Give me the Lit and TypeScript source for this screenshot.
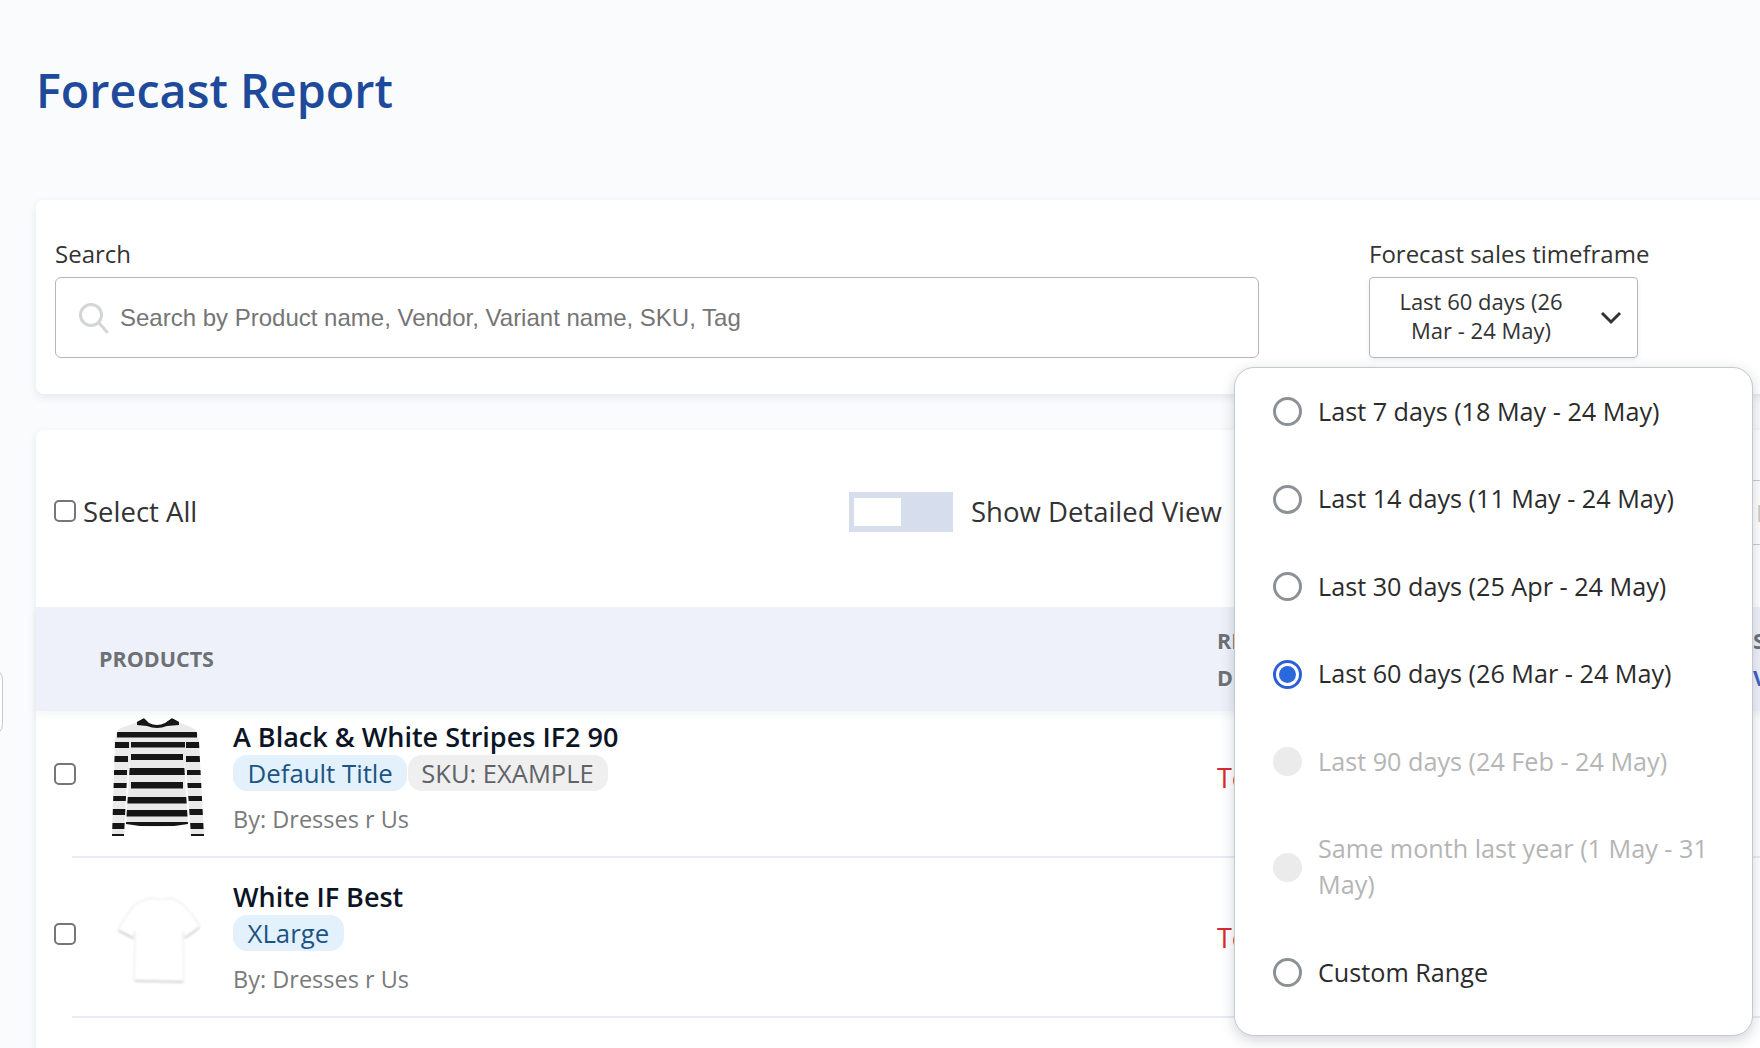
import { LitElement, html, css, svg } from "lit";
import { customElement } from "lit/decorators.js";

const ranges = [
  { label: "Last 7 days (18 May - 24 May)", state: "" },
  { label: "Last 14 days (11 May - 24 May)", state: "" },
  { label: "Last 30 days (25 Apr - 24 May)", state: "" },
  { label: "Last 60 days (26 Mar - 24 May)", state: "on" },
  { label: "Last 90 days (24 Feb - 24 May)", state: "off" },
  { label: "Same month last year (1 May - 31 May)", state: "off" },
  { label: "Custom Range", state: "" },
];

const stripes = svg`
  <svg class="thumb" viewBox="0 0 100 120" width="100" height="120" aria-hidden="true">
    <defs>
      <clipPath id="shirt">
        <path d="M28 5 L37 0 L42 5 Q50 9 58 5 L65 0 L74 5 L86 10 Q92 14 92 24 L97 118 L84 118 L80 60 Q78 50 77 44 L81 106 Q50 112 19 106 L23 44 Q22 50 20 60 L17 118 L5 118 L8 24 Q8 14 14 10 Z" />
      </clipPath>
      <filter id="soft" x="-5%" y="-5%" width="110%" height="110%"><feGaussianBlur stdDeviation="0.7" /></filter>
    </defs>
    <g clip-path="url(#shirt)" filter="url(#soft)">
      <rect width="100" height="120" fill="#ebeaea" />
      <g fill="#161616">
        <path d="M30 3 L37 0 L42 4 Q50 8 58 4 L65 0 L72 3 L72 7 L60 8 Q50 12 40 8 L30 7 Z" />
        <rect x="10" y="14" width="80" height="5.5" />
        <rect x="24" y="24" width="54" height="5.5" />
        <rect x="24" y="36" width="52" height="6" />
        <rect x="22" y="50" width="56" height="7" />
        <rect x="24" y="64" width="52" height="6.5" />
        <rect x="20" y="79" width="60" height="6.5" />
        <rect x="18" y="92" width="64" height="6.5" />
        <rect x="18" y="104" width="64" height="4" />
        <rect x="0" y="24" width="22" height="6" />
        <rect x="0" y="38" width="21" height="6" />
        <rect x="0" y="52" width="20" height="5" />
        <rect x="0" y="65" width="20" height="5" />
        <rect x="0" y="78" width="20" height="5" />
        <rect x="0" y="91" width="20" height="6" />
        <rect x="0" y="105" width="20" height="6" />
        <rect x="0" y="116" width="20" height="2" />
        <rect x="79" y="24" width="21" height="6" />
        <rect x="79" y="38" width="21" height="6" />
        <rect x="80" y="52" width="20" height="5" />
        <rect x="80" y="65" width="20" height="5" />
        <rect x="80" y="78" width="20" height="5" />
        <rect x="80" y="91" width="20" height="6" />
        <rect x="80" y="105" width="20" height="6" />
        <rect x="80" y="116" width="20" height="2" />
      </g>
    </g>
  </svg>`;

const tee = svg`
  <svg class="thumb" viewBox="0 0 100 120" width="100" height="120" aria-hidden="true">
    <defs>
      <filter id="teeblur" x="-10%" y="-10%" width="120%" height="120%"><feGaussianBlur stdDeviation="0.9" /></filter>
    </defs>
    <path d="M30 25 L44 20 Q54 23 64 20 L72 24 Q84 32 93 49 L78 60 L76 53 L77 104 L27 102 L28 53 L26 60 L11 52 Q20 34 30 25 Z"
      fill="#fff" stroke="#ececec" stroke-width="1.2" filter="url(#teeblur)" />
    <path d="M28 103 L76 104 M12 53 L26 60 M78 60 L92 50" stroke="#d8d8d8" stroke-width="2" fill="none" filter="url(#teeblur)" />
  </svg>`;

@customElement("app-root")
export class AppRoot extends LitElement {
  static styles = css`
    :host {
      display: block;
      width: 1760px;
      height: 1048px;
      overflow: hidden;
      position: relative;
      background: #fafbfd;
      font-family: "Open Sans", sans-serif;
      color: #222;
    }
    .page {
      width: 2000px;
      padding: 0 0 0 36px;
      box-sizing: border-box;
    }
    h1 {
      margin: 0;
      padding-top: 61px;
      height: 200px;
      box-sizing: border-box;
      font-size: 46.7px;
      line-height: 58px;
      font-weight: 600;
      color: #1e4a9c;
    }
    .card {
      background: #fff;
      border-radius: 8px;
      box-shadow: 0 3px 8px rgba(40, 50, 80, 0.1);
    }
    .filters {
      height: 194px;
      box-sizing: border-box;
      padding: 35px 0 0 19px;
      display: flex;
      gap: 110px;
    }
    .field label {
      display: block;
      height: 42px;
      font-size: 24px;
      line-height: 38px;
      color: #333;
    }
    .search-box {
      width: 1204px;
      height: 81px;
      box-sizing: border-box;
      border: 1px solid #b5b7c0;
      border-radius: 6px;
      display: flex;
      align-items: center;
      padding-left: 22px;
      gap: 10px;
    }
    .search-box input {
      border: 0;
      outline: 0;
      flex: 1;
      background: transparent;
      font-family: "Liberation Sans", sans-serif;
      font-size: 24px;
      padding: 0;
    }
    .search-box input::placeholder { color: #757575; }
    .select {
      width: 269px;
      height: 81px;
      box-sizing: border-box;
      border: 1px solid #b5b7c0;
      border-radius: 4px;
      box-shadow: 0 2px 5px rgba(40, 50, 80, 0.08);
      display: flex;
      align-items: center;
      padding-right: 15px;
    }
    .select span {
      flex: 1;
      text-align: center;
      font-size: 22px;
      line-height: 29px;
      color: #333;
      padding: 0 31px 3px 23px;
    }
    .table { margin-top: 36px; min-height: 800px; }
    .toolbar {
      height: 177px;
      padding-bottom: 15px;
      box-sizing: border-box;
      display: flex;
      align-items: center;
      font-size: 27.5px;
      color: #333;
    }
    .select-all {
      width: 795px;
      padding-left: 18px;
      box-sizing: content-box;
      display: flex;
      align-items: center;
      gap: 7px;
      flex: none;
    }
    .toggle-group {
      width: 904px;
      flex: none;
      display: flex;
      align-items: center;
      gap: 18px;
    }
    .toggle {
      width: 104px;
      height: 40px;
      margin-top: 2px;
      box-sizing: border-box;
      padding: 6px 0 0 5px;
      background: #d6deee;
    }
    .toggle i {
      display: block;
      width: 47px;
      height: 28px;
      background: #fff;
    }
    .export-box {
      width: 200px;
      height: 65px;
      margin-top: 2px;
      box-sizing: border-box;
      border-top: 1px solid #ccc;
      border-bottom: 1px solid #ccc;
      padding-left: 3px;
      line-height: 63px;
      font-size: 24px;
      color: #ccc;
    }
    input[type="checkbox"] {
      appearance: none;
      width: 22px;
      height: 22px;
      margin: 0;
      flex: none;
      box-sizing: border-box;
      border: 2px solid #767676;
      border-radius: 5px;
      background: #fff;
    }
    .thead {
      position: relative;
      z-index: 1;
      height: 104px;
      display: flex;
      align-items: center;
      background: #eef1f9;
      box-shadow: 0 4px 8px rgba(40, 50, 80, 0.05);
      font-size: 21.5px;
      line-height: 37px;
      font-weight: 700;
      color: #6d7175;
    }
    .col-a { width: 1181px; padding: 0 0 2px 63px; box-sizing: border-box; flex: none; }
    .col-b { width: 536px; flex: none; }
    .col-c { flex: none; }
    .col-c a { color: #3f5fc8; }
    .rows { margin-top: -13px; }
    .row {
      margin-left: 36px;
      height: 160px;
      box-sizing: border-box;
      border-bottom: 2px solid #e8ecf6;
      padding-top: 21px;
      display: flex;
      align-items: flex-start;
    }
    .row input { margin: 44px 0 0 -18px; }
    .thumb { flex: none; margin: -1px 26px 0 31px; }
    .info { width: 984px; flex: none; }
    .name {
      font-size: 27px;
      line-height: 36px;
      font-weight: 600;
      color: #0b1526;
    }
    .chips { display: flex; gap: 1px; height: 36px; }
    .chip {
      font-size: 25.8px;
      line-height: 36px;
      padding: 0 14.5px;
      border-radius: 14px;
      background: #e3f1fd;
      color: #1d5484;
    }
    .chip.sku { background: #efefef; color: #5f6368; font-size: 25.5px; padding: 0 14px 0 13px; }
    .by {
      margin-top: 9px;
      font-size: 23.5px;
      line-height: 38px;
      color: #7a7a7a;
    }
    .status {
      font-size: 27px;
      line-height: 36px;
      margin-top: 41px;
      color: #d82c2c;
    }
    .edge-tab {
      position: absolute;
      left: -20px;
      top: 668px;
      width: 23px;
      height: 68px;
      box-sizing: border-box;
      background: #fff;
      border: 1px solid #c4c8d2;
      border-radius: 12px;
    }
    .menu {
      position: absolute;
      left: 1234px;
      top: 367px;
      width: 519px;
      height: 669px;
      box-sizing: border-box;
      z-index: 2;
      background: #fff;
      border: 1px solid #c4c8d0;
      border-radius: 20px;
      box-shadow: 0 4px 14px rgba(30, 40, 60, 0.2);
    }
    .opt {
      display: flex;
      align-items: center;
      gap: 16px;
      padding: 25.75px 30px 25.75px 38px;
      font-size: 25.2px;
      line-height: 36px;
      color: #2b2b2b;
    }
    .opt .text { transform: translateY(-1px); }
    .opt.off { color: #b5b5b5; }
    .dot {
      flex: none;
      width: 29px;
      height: 29px;
      box-sizing: border-box;
      border: 3px solid #8c9196;
      border-radius: 50%;
      display: grid;
      place-items: center;
    }
    .opt.on .dot { border-color: #2b5fd9; }
    .opt.on .dot::after {
      content: "";
      width: 17px;
      height: 17px;
      border-radius: 50%;
      background: #2b68dd;
    }
    .opt.off .dot { border: 0; background: #ebebeb; }
  `;

  private row(name: string, chips: unknown, image: unknown) {
    return html`<div class="row">
      <input type="checkbox" aria-label="Select ${name}" />
      ${image}
      <div class="info">
        <div class="name">${name}</div>
        <div class="chips">${chips}</div>
        <div class="by">By: Dresses r Us</div>
      </div>
      <div class="status">Today</div>
    </div>`;
  }

  render() {
    return html`
      <div class="page">
        <h1>Forecast Report</h1>
        <section class="card filters">
          <div class="field">
            <label>Search</label>
            <div class="search-box">
              <svg width="32" height="32" viewBox="0 0 32 32" fill="none" stroke="#d4d5d7" stroke-width="3" aria-hidden="true">
                <circle cx="13" cy="13" r="10.5" />
                <path d="M21 21 L29 30" stroke-linecap="round" />
              </svg>
              <input placeholder="Search by Product name, Vendor, Variant name, SKU, Tag" />
            </div>
          </div>
          <div class="field">
            <label>Forecast sales timeframe</label>
            <div class="select">
              <span>Last 60 days (26 Mar - 24 May)</span>
              <svg width="22" height="14" viewBox="0 0 22 14" fill="none" stroke="#333" stroke-width="3" aria-hidden="true">
                <path d="M2 2 L11 11 L20 2" />
              </svg>
            </div>
          </div>
        </section>
        <section class="card table">
          <div class="toolbar">
            <label class="select-all"><input type="checkbox" />Select All</label>
            <div class="toggle-group">
              <div class="toggle"><i></i></div>
              <span>Show Detailed View</span>
            </div>
            <div class="export-box">Export</div>
          </div>
          <div class="thead">
            <div class="col-a">PRODUCTS</div>
            <div class="col-b">RESTOCK<br />DUE</div>
            <div class="col-c">SALES<br /><a>View</a></div>
          </div>
          <div class="rows">
            ${this.row(
              "A Black & White Stripes IF2 90",
              html`<span class="chip">Default Title</span><span class="chip sku">SKU: EXAMPLE</span>`,
              stripes
            )}
            ${this.row("White IF Best", html`<span class="chip">XLarge</span>`, tee)}
          </div>
        </section>
      </div>
      <div class="edge-tab"></div>
      <div class="menu">
        ${ranges.map(
          (r) => html`<div class="opt ${r.state}"><span class="dot"></span><span class="text">${r.label}</span></div>`
        )}
      </div>
    `;
  }
}
